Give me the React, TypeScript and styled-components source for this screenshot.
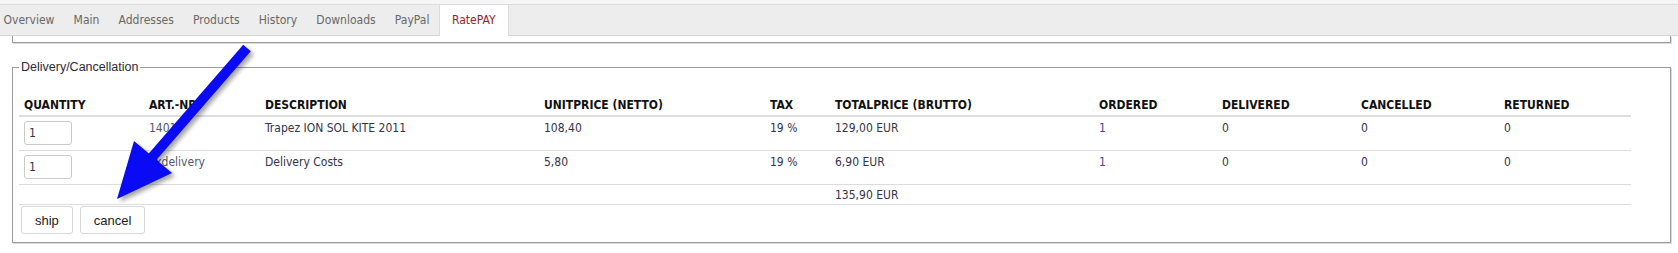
import styled, { createGlobalStyle } from "styled-components";

const GlobalStyle = createGlobalStyle`
  body {
    margin: 0;
    background: #ffffff;
    font-family: "DejaVu Sans Condensed", "Liberation Sans", Arial, sans-serif;
  }
`;

const Page = styled.div`
  position: relative;
  width: 1678px;
  height: 253px;
  overflow: hidden;
  background: #ffffff;
`;

const TopStrip = styled.div`
  height: 4px;
  background: #f6f6f6;
`;

const TabBar = styled.div`
  display: flex;
  height: 30px;
  background: #ededed;
  border-top: 1px solid #dcdcdc;
  border-bottom: 1px solid #d6d6d6;
`;

const TabList = styled.div`
  display: flex;
  margin-left: -6px;
`;

const Tab = styled.div<{ $active?: boolean }>`
  padding: 0 ${(p) => (p.$active ? "12px" : "9.6px")};
  height: ${(p) => (p.$active ? "31px" : "30px")};
  line-height: 30px;
  font-size: 12px;
  color: ${(p) => (p.$active ? "#9c1a2c" : "#676767")};
  background: ${(p) => (p.$active ? "#ffffff" : "transparent")};
  border-left: ${(p) => (p.$active ? "1px solid #dcdcdc" : "none")};
  border-right: ${(p) => (p.$active ? "1px solid #dcdcdc" : "none")};
  white-space: nowrap;
`;

const Content = styled.div`
  padding-left: 12px;
`;

const UpperBox = styled.div`
  box-sizing: border-box;
  width: 1659px;
  height: 7px;
  border: 1px solid #9a9a9a;
  border-top: none;
  box-shadow: 1px 1px 0 #dcdcdc;
`;

const Fieldset = styled.fieldset`
  box-sizing: border-box;
  width: 1659px;
  min-width: 0;
  margin: 17px 0 0 0;
  padding: 20px 6px 8px 6px;
  border: 1px solid #9a9a9a;
  box-shadow: 1px 1px 0 #dcdcdc;
`;

const Legend = styled.legend`
  padding: 0 2px;
  font-family: "Liberation Sans", Arial, sans-serif;
  font-size: 12.5px;
  line-height: 14px;
  color: #2a2a3a;
`;

const Table = styled.table`
  width: 1612px;
  border-collapse: collapse;
  table-layout: fixed;
`;

const HeadCell = styled.th`
  padding: 4px 5px 3px;
  text-align: left;
  font-size: 12px;
  line-height: 14px;
  font-weight: bold;
  color: #111111;
  border-bottom: 2px solid #dddddd;
  white-space: nowrap;
`;

const Row = styled.tr`
  border-bottom: 1px solid #dcdcdc;
`;

const Cell = styled.td<{ $tone?: "link" | "muted" }>`
  padding: 4px 5px 5px;
  vertical-align: top;
  font-size: 12px;
  line-height: 14px;
  white-space: nowrap;
  color: ${(p) =>
    p.$tone === "link" ? "#4a3f92" : p.$tone === "muted" ? "#55556a" : "#333348"};
`;

const SumCell = styled.td`
  padding: 3px 5px 2px;
  font-size: 12px;
  line-height: 14px;
  color: #333348;
`;

const QtyInput = styled.input`
  display: block;
  box-sizing: border-box;
  width: 48px;
  height: 24px;
  margin: 0;
  padding: 0 4px;
  border: 1px solid #c9c9c9;
  border-radius: 3px;
  font-family: inherit;
  font-size: 12px;
  color: #333348;
  background: #ffffff;
`;

const ButtonRow = styled.div`
  display: flex;
  gap: 7px;
  margin: 1px 0 0 2px;
`;

const Button = styled.button`
  box-sizing: border-box;
  height: 28px;
  padding: 0 13px;
  border: 1px solid #d8d8d8;
  border-radius: 3px;
  background: #ffffff;
  font-family: "Liberation Sans", Arial, sans-serif;
  font-size: 13px;
  color: #1a1a1a;
`;

const ArrowLayer = styled.svg`
  position: absolute;
  left: 0;
  top: 0;
  pointer-events: none;
  filter: drop-shadow(3px 3px 2px rgba(0, 0, 0, 0.35));
`;

const columns = [
  { label: "QUANTITY", width: 125 },
  { label: "ART.-NR.", width: 116 },
  { label: "DESCRIPTION", width: 279 },
  { label: "UNITPRICE (NETTO)", width: 226 },
  { label: "TAX", width: 65 },
  { label: "TOTALPRICE (BRUTTO)", width: 264 },
  { label: "ORDERED", width: 123 },
  { label: "DELIVERED", width: 139 },
  { label: "CANCELLED", width: 143 },
  { label: "RETURNED", width: 132 },
];

const items = [
  {
    artNum: "1401",
    title: "Trapez ION SOL KITE 2011",
    unit: "108,40",
    tax: "19 %",
    total: "129,00 EUR",
  },
  {
    artNum: "oxdelivery",
    title: "Delivery Costs",
    unit: "5,80",
    tax: "19 %",
    total: "6,90 EUR",
  },
];

const tabs = ["Overview", "Main", "Addresses", "Products", "History", "Downloads", "PayPal", "RatePAY"];

function App() {
  return (
    <Page>
      <GlobalStyle />
      <TopStrip />
      <TabBar>
        <TabList>
          {tabs.map((t) => (
            <Tab key={t} $active={t === "RatePAY"}>
              {t}
            </Tab>
          ))}
        </TabList>
      </TabBar>
      <Content>
        <UpperBox />
        <Fieldset>
          <Legend>Delivery/Cancellation</Legend>
          <Table>
            <colgroup>
              {columns.map((c) => (
                <col key={c.label} style={{ width: c.width }} />
              ))}
            </colgroup>
            <thead>
              <tr>
                {columns.map((c) => (
                  <HeadCell key={c.label}>{c.label}</HeadCell>
                ))}
              </tr>
            </thead>
            <tbody>
              {items.map((item) => (
                <Row key={item.artNum}>
                  <Cell>
                    <QtyInput defaultValue="1" />
                  </Cell>
                  <Cell $tone="muted">{item.artNum}</Cell>
                  <Cell>{item.title}</Cell>
                  <Cell>{item.unit}</Cell>
                  <Cell>{item.tax}</Cell>
                  <Cell>{item.total}</Cell>
                  <Cell $tone="link">1</Cell>
                  <Cell>0</Cell>
                  <Cell>0</Cell>
                  <Cell>0</Cell>
                </Row>
              ))}
              <Row>
                <SumCell colSpan={5} />
                <SumCell>135,90 EUR</SumCell>
                <SumCell colSpan={4} />
              </Row>
            </tbody>
          </Table>
          <ButtonRow>
            <Button>ship</Button>
            <Button>cancel</Button>
          </ButtonRow>
        </Fieldset>
      </Content>
      <ArrowLayer width="1678" height="253" viewBox="0 0 1678 253">
        <line x1="247" y1="48" x2="148" y2="162" stroke="#0a0af5" strokeWidth="10" />
        <polygon points="117,199 134,141 172,173" fill="#0a0af5" />
      </ArrowLayer>
    </Page>
  );
}

export default App;
